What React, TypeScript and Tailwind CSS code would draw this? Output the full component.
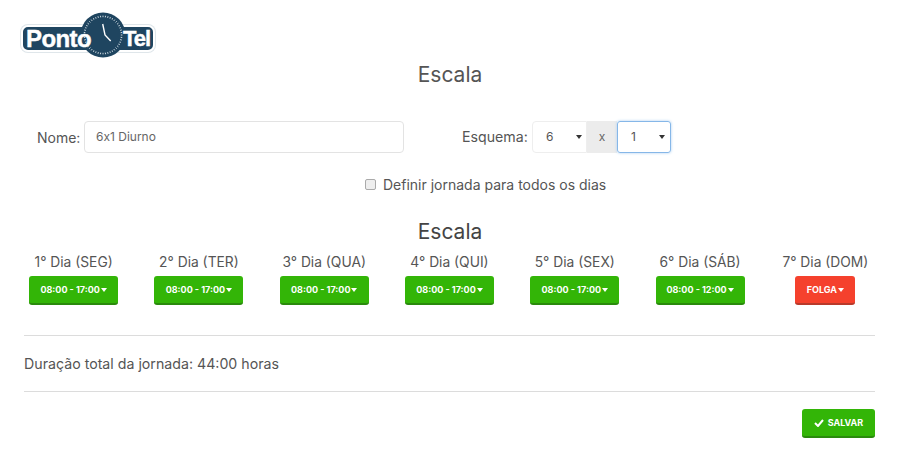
import React from "react";

const font = { fontFamily: 'Inter, "Noto Sans", sans-serif' };

function Caret({ className }: { className?: string }) {
  return (
    <svg width="6" height="4" viewBox="0 0 6 4" className={className} aria-hidden="true">
      <path d="M0 0h6L3 4z" fill="currentColor" />
    </svg>
  );
}

function Logo() {
  const ticks = Array.from({ length: 48 }, (_, i) => i);
  return (
    <div className="relative w-[136px] h-[48px] ml-[20px]">
      <div className="absolute left-[1px] top-[13px] w-[134px] h-[27px] rounded-[7px] bg-[#1f4560] border-2 border-white shadow-[0_0_0_1px_#dfe6ea]" />
      <svg className="absolute left-[59px] top-0" width="48" height="46" viewBox="0 0 48 46" aria-hidden="true">
        <circle cx="24" cy="23" r="22.5" fill="#1f4560" />
        {ticks.map((i) => (
          <line
            key={i}
            x1="24"
            y1="3.6"
            x2="24"
            y2="5.2"
            stroke="#d8e2e8"
            strokeWidth="0.9"
            transform={`rotate(${i * 7.5} 24 23)`}
          />
        ))}
        <path d="M23.7 12 L26 23 L31.7 29" fill="none" stroke="#ffffff" strokeWidth="1.4" strokeLinejoin="miter" />
      </svg>
      <span
        className="absolute left-[6px] top-[13px] text-[24px] leading-[28px] font-bold tracking-[-0.6px] text-white [-webkit-text-stroke:0.4px_white]"
        style={{ fontFamily: '"Liberation Sans", sans-serif' }}
      >
        Ponto
      </span>
      <span
        className="absolute left-[103px] top-[13px] text-[22px] leading-[28px] font-bold tracking-[-1px] text-white [-webkit-text-stroke:0.4px_white]"
        style={{ fontFamily: '"Liberation Sans", sans-serif' }}
      >
        Tel
      </span>
    </div>
  );
}

function DayColumn({ label, time, off }: { label: string; time: string; off?: boolean }) {
  return (
    <div className="flex flex-col items-center">
      <div className="h-[24px] leading-[24px] text-[13.8px] text-[#555]">{label}</div>
      <button
        className={
          off
            ? "mt-[2px] h-[29px] w-[60px] rounded-[3px] bg-[#f5412d] border-b-2 border-[#b93a2b] text-white text-[9px] font-bold flex items-center justify-center gap-[1px]"
            : "mt-[2px] h-[29px] w-[89px] rounded-[3px] bg-[#33b507] border-b-2 border-[#2a8a0c] text-white text-[9px] font-bold flex items-center justify-center gap-[1px]"
        }
      >
        {time}
        <Caret />
      </button>
    </div>
  );
}

const days = [
  { label: "1° Dia (SEG)", time: "08:00 - 17:00" },
  { label: "2° Dia (TER)", time: "08:00 - 17:00" },
  { label: "3° Dia (QUA)", time: "08:00 - 17:00" },
  { label: "4° Dia (QUI)", time: "08:00 - 17:00" },
  { label: "5° Dia (SEX)", time: "08:00 - 17:00" },
  { label: "6° Dia (SÁB)", time: "08:00 - 12:00" },
  { label: "7° Dia (DOM)", time: "FOLGA", off: true },
];

export default function App() {
  return (
    <div className="w-[900px] h-[465px] bg-white overflow-hidden pt-[12px]" style={font}>
      <div className="h-[48px]">
        <Logo />
      </div>
      <h1 className="h-[30px] text-center text-[21px] leading-[30px] text-[#555]">Escala</h1>

      <div className="mt-[31px] flex items-center h-[32px]">
        <label className="ml-[37px] text-[14px] text-[#555] w-[47px]">Nome:</label>
        <div className="w-[320px] h-[32px] rounded-[4px] border border-[#e3e3e3] flex items-center pl-[11px] text-[12px] text-[#666] [font-feature-settings:'calt'_0]">
          6x1 Diurno
        </div>
        <label className="ml-[58px] text-[14.2px] text-[#555] w-[70px]">Esquema:</label>
        <div className="flex h-[32px] text-[12px] text-[#555]">
          <div className="w-[55px] border border-[#eeeeee] rounded-l-[4px] flex items-center justify-between pl-[13px] pr-[4px]">
            6
            <Caret className="text-[#333]" />
          </div>
          <div className="w-[30px] bg-[#ececec] flex items-center justify-center text-[#666]">x</div>
          <div className="w-[54px] border border-[#86b7e8] rounded-[3px] shadow-[0_0_3px_#a9cdf0] flex items-center justify-between pl-[13px] pr-[5px]">
            1
            <Caret className="text-[#333]" />
          </div>
        </div>
      </div>

      <div className="mt-[21px] h-[20px] ml-[365px] flex items-center gap-[7px] text-[14px] text-[#555]">
        <span className="w-[11px] h-[11px] rounded-[2px] border border-[#aaa] bg-[#eeeeee]" />
        Definir jornada para todos os dias
      </div>

      <h2 className="mt-[24px] h-[28px] text-center text-[21px] leading-[28px] text-[#444]">Escala</h2>

      <div className="mt-[4px] pl-[11px] pr-[12px] grid grid-cols-7">
        {days.map((d) => (
          <DayColumn key={d.label} {...d} />
        ))}
      </div>

      <div className="mt-[30px] ml-[24px] mr-[25px] border-t border-[#dcdcdc]" />
      <div className="ml-[24px] mr-[25px] h-[55px] flex items-center text-[14.2px] text-[#555]">
        Duração total da jornada: 44:00 horas
      </div>
      <div className="ml-[24px] mr-[25px] border-t border-[#dcdcdc]" />

      <div className="mt-[17px] mr-[25px] flex justify-end">
        <button className="h-[29px] w-[73px] rounded-[3px] bg-[#33b507] border-b-2 border-[#2a8a0c] text-white text-[9px] font-bold flex items-center justify-center gap-[4px]">
          <svg width="10" height="8" viewBox="0 0 10 8" aria-hidden="true">
            <path d="M1 4l3 3 5-6" fill="none" stroke="currentColor" strokeWidth="2" />
          </svg>
          SALVAR
        </button>
      </div>
    </div>
  );
}
